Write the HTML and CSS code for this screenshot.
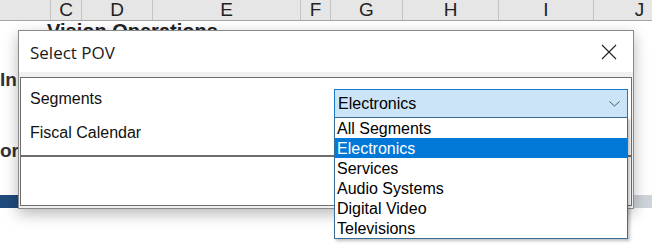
FILE: index.html
```html
<!DOCTYPE html>
<html lang="en">

<head>
    <meta charset="UTF-8">
    <meta name="viewport" content="width=device-width, initial-scale=1.0">
    <title>Select POV</title>
    <link rel="stylesheet" href="styles.css">
</head>

<body>

    <div class="sheet">
        <div class="col-headers">
            <div class="col col-b"></div>
            <div class="col col-c">C</div>
            <div class="col col-d">D</div>
            <div class="col col-e">E</div>
            <div class="col col-f">F</div>
            <div class="col col-g">G</div>
            <div class="col col-h">H</div>
            <div class="col col-i">I</div>
            <div class="col col-j">J</div>
        </div>

        <div class="cells">
            <div class="cell-row heading-row">Vision Operations</div>
            <div class="cell-row row-in">In</div>
            <div class="cell-row row-ort">ort</div>
            <div class="band-row">
                <div class="band-sel"></div>
                <div class="band-rest"></div>
            </div>
        </div>
    </div>

    <div class="dialog">
        <div class="dialog-title">
            <span>Select POV</span>
            <svg class="close" width="16" height="16" viewBox="0 0 16 16">
                <path d="M1 1 L15 15 M15 1 L1 15" stroke="#222" stroke-width="1.1" fill="none" />
            </svg>
        </div>

        <div class="dialog-body">
            <div class="panel">
                <div class="field-row first">
                    <label>Segments</label>
                    <div class="combo open">
                        <span>Electronics</span>
                        <svg class="chevron" width="11" height="6" viewBox="0 0 11 6">
                            <path d="M0.5 0.5 L5.5 5 L10.5 0.5" stroke="#555" stroke-width="1" fill="none" />
                        </svg>
                        <ul class="dropdown">
                            <li>All Segments</li>
                            <li class="selected">Electronics</li>
                            <li>Services</li>
                            <li>Audio Systems</li>
                            <li>Digital Video</li>
                            <li>Televisions</li>
                        </ul>
                    </div>
                </div>
                <div class="field-row second">
                    <label>Fiscal Calendar</label>
                    <div class="combo plain"></div>
                </div>
                <div class="panel-footer"></div>
            </div>
        </div>
    </div>

</body>

</html>
```

FILE: styles.css
```css
* {
    box-sizing: border-box;
}

body {
    margin: 0;
    width: 652px;
    height: 250px;
    overflow: hidden;
    position: relative;
    background-color: #ffffff;
    font-family: 'Liberation Sans', Arial, sans-serif;
    color: #222;
}

/* spreadsheet behind the dialog */

.col-headers {
    display: flex;
    height: 21px;
    background-color: #e6e6e6;
    border-bottom: 1px solid #a6a6a6;
    overflow: hidden;
}

.col {
    flex: none;
    height: 20px;
    line-height: 20px;
    font-size: 19px;
    text-align: center;
    border-right: 1px solid #c4c4c4;
}

.col-b { width: 51px; }
.col-c { width: 31px; }
.col-d { width: 71px; }
.col-e { width: 148px; }
.col-f { width: 30px; }
.col-g { width: 72px; }
.col-h { width: 96px; }
.col-i { width: 95px; }
.col-j { width: 92px; }

.cells {
    display: flex;
    flex-direction: column;
}

.cell-row {
    white-space: nowrap;
    font-weight: bold;
}

.heading-row {
    height: 20px;
    line-height: 20px;
    font-size: 20px;
    padding-left: 47px;
}

.row-in,
.row-ort {
    height: 24px;
    line-height: 24px;
    font-size: 19px;
    color: #333;
}

.row-in {
    margin-top: 27px;
}

.row-ort {
    margin-top: 47px;
}

.band-row {
    display: flex;
    height: 13px;
    margin-top: 32px;
}

.band-sel {
    width: 50px;
    background-color: #1f4b7c;
}

.band-rest {
    flex: 1;
    background-color: #cfd3da;
}

/* dialog */

.dialog {
    position: absolute;
    left: 18px;
    top: 30px;
    width: 616px;
    height: 179px;
    background-color: #f0f0f0;
    border: 1px solid #8a8a8a;
    box-shadow: 0 5px 14px rgba(0, 0, 0, 0.28);
}

.dialog-title {
    display: flex;
    justify-content: space-between;
    align-items: center;
    height: 41px;
    padding: 2px 16px 0 11px;
    background-color: #ffffff;
    font-family: 'Open Sans', 'Noto Sans', sans-serif;
    font-size: 17px;
    line-height: 39px;
    color: #1a1a1a;
}

.close {
    display: block;
    margin-top: -1px;
}

.dialog-body {
    padding: 5px 1px 2px 1px;
}

.panel {
    background-color: #ffffff;
    border: 1px solid #6e6e6e;
    height: 129px;
    display: flex;
    flex-direction: column;
}

.field-row {
    display: flex;
    align-items: flex-start;
    padding-left: 9px;
    font-size: 16px;
    color: #111;
}

.field-row label {
    width: 304px;
    line-height: 20px;
}

.field-row.first {
    height: 40px;
    padding-top: 11px;
}

.field-row.second {
    height: 37px;
    padding-top: 5px;
}

.combo {
    position: relative;
    width: 294px;
    height: 29px;
    display: flex;
    align-items: center;
    justify-content: space-between;
    padding: 0 7px 0 3px;
    line-height: 27px;
    border: 1px solid #1979ca;
    background-color: #cce4f7;
    color: #000;
}

.combo.plain {
    margin-top: -5px;
    background-color: #ffffff;
    border-color: #7a7a7a;
}

.chevron {
    display: block;
    margin-top: 1px;
}

.dropdown {
    position: absolute;
    left: -1px;
    top: 100%;
    width: 294px;
    margin: 0;
    padding: 0;
    list-style: none;
    background-color: #ffffff;
    border: 1px solid #3b6e96;
    box-shadow: 2px 2px 3px rgba(0, 0, 0, 0.25);
    z-index: 2;
}

.dropdown li {
    height: 20px;
    line-height: 21px;
    padding-left: 2px;
    white-space: nowrap;
}

.dropdown li.selected {
    background-color: #0078d7;
    color: #ffffff;
}

.panel-footer {
    flex: 1;
    border-top: 2px solid #6d6d6d;
}
```
